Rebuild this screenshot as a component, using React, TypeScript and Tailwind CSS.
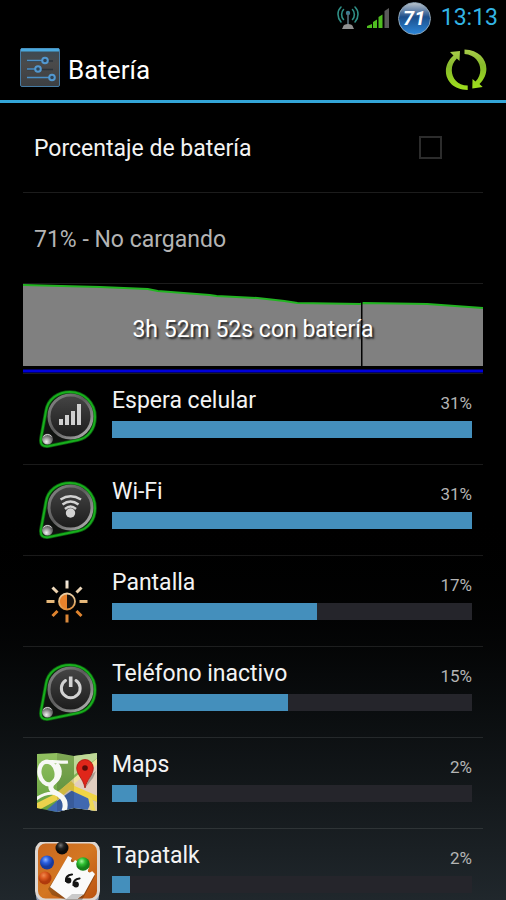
import React from 'react';

const history = [
    [0, 1], [77, 3], [125, 5], [135, 7], [187, 11], [194, 12], [235, 14], [262, 17],
    [275, 19], [338, 20], [341, 19], [405, 20], [461, 24],
];

function Drop({ id, children }: { id: string; children: React.ReactNode }) {
    return (
        <svg viewBox="0 0 65 65" className="w-full" aria-hidden="true">
            <defs>
                <linearGradient id={`${id}-ring`} x1="0" y1="0" x2="1" y2="1">
                    <stop offset="0" stopColor="#8a8a8a" />
                    <stop offset="0.45" stopColor="#5c5c5c" />
                    <stop offset="0.75" stopColor="#8a8a8a" />
                    <stop offset="1" stopColor="#c4c4c4" />
                </linearGradient>
                <linearGradient id={`${id}-face`} x1="0" y1="0" x2="0" y2="1">
                    <stop offset="0" stopColor="#454545" />
                    <stop offset="1" stopColor="#1b1b1b" />
                </linearGradient>
                <radialGradient id={`${id}-ball`} cx="0.4" cy="0.75" r="0.8">
                    <stop offset="0" stopColor="#f2f2f2" />
                    <stop offset="0.5" stopColor="#8d8d8d" />
                    <stop offset="1" stopColor="#333" />
                </radialGradient>
            </defs>
            <path
                d="M11 24C13 12 23 5 35 5C49 5 60 16 60 30C60 42 53 51 43 53L14 59C8 60 5 58 6 51Z"
                fill="#101310"
                stroke="#0a5a0d"
                strokeWidth="3.6"
                strokeLinejoin="round"
            />
            <path
                d="M11 24C13 12 23 5 35 5C49 5 60 16 60 30C60 42 53 51 43 53L14 59C8 60 5 58 6 51Z"
                fill="none"
                stroke="#18ae1d"
                strokeWidth="2"
                strokeLinejoin="round"
            />
            <circle cx="35.5" cy="29.5" r="21.5" fill={`url(#${id}-face)`} stroke={`url(#${id}-ring)`} strokeWidth="3" />
            <circle cx="12.5" cy="52" r="5.5" fill={`url(#${id}-ball)`} />
            <path d="M8.5 49.5a5 5 0 0 1 8 0" fill="none" stroke="#ddd" strokeWidth="1" />
            {children}
        </svg>
    );
}

function CellIcon() {
    return (
        <Drop id="cell">
            <g fill="#d0d0d0">
                <rect x="24" y="32" width="4" height="6" />
                <rect x="30" y="28" width="4" height="10" />
                <rect x="36" y="24" width="4" height="14" />
                <rect x="42" y="17" width="4" height="21" />
            </g>
        </Drop>
    );
}

function WifiIcon() {
    return (
        <Drop id="wifi">
            <g fill="none" stroke="#d2d2d2" strokeWidth="2.4">
                <path d="M25.5 21.5Q35.5 15 46 21.5" />
                <path d="M27.5 26.5Q35.5 20.5 43.5 26.5" />
                <path d="M30 31Q35.5 26 41 31" />
            </g>
            <circle cx="35.5" cy="35" r="4.7" fill="#d2d2d2" />
        </Drop>
    );
}

function PowerIcon() {
    return (
        <Drop id="power">
            <path d="M30.5 20.500a9.400 9.400 0 1 0 10.500 0" fill="none" stroke="#d2d2d2" strokeWidth="3" strokeLinecap="round" />
            <path d="M35.7 16.5V27" fill="none" stroke="#d2d2d2" strokeWidth="3.6" />
        </Drop>
    );
}

function DisplayIcon() {
    return (
        <svg viewBox="0 0 65 65" className="w-full" aria-hidden="true">
            <defs>
                <linearGradient id="sun" x1="0" y1="12" x2="0" y2="53" gradientUnits="userSpaceOnUse">
                    <stop offset="0" stopColor="#f3ece2" />
                    <stop offset="0.5" stopColor="#e5b87b" />
                    <stop offset="0.75" stopColor="#e0822a" />
                    <stop offset="1" stopColor="#d98a3f" />
                </linearGradient>
            </defs>
            <g fill="url(#sun)">
                <rect x="30.5" y="11.5" width="3" height="8" />
                <rect x="30.5" y="45.5" width="3" height="8" />
                <rect x="11.5" y="31" width="8" height="3" />
                <rect x="44.5" y="31" width="8" height="3" />
            </g>
            <path d="M17.5 18.500L22.500 23.500M41.500 23.500L46.500 18.500M17.500 47L22.500 42M41.500 42L46.500 47" fill="none" stroke="url(#sun)" strokeWidth="3" />
            <circle cx="32" cy="32.5" r="8" fill="#17120e" />
            <path d="M32 24.5a8 8 0 0 0 0 16z" fill="#e8812b" />
            <circle cx="32" cy="32.5" r="8" fill="none" stroke="url(#sun)" strokeWidth="1.8" />
        </svg>
    );
}

function MapsIcon() {
    return (
        <svg viewBox="0 0 65 65" className="w-full" aria-hidden="true">
            <defs>
                <clipPath id="maps-sheet">
                    <path d="M2 3L22 2L39 5L62 2V60L39 57L22 61L2 57Z" />
                </clipPath>
                <linearGradient id="maps-green" x1="0" y1="0" x2="0" y2="1">
                    <stop offset="0" stopColor="#93c262" />
                    <stop offset="1" stopColor="#5f9c3a" />
                </linearGradient>
            </defs>
            <g clipPath="url(#maps-sheet)">
                <rect width="65" height="65" fill="url(#maps-green)" />
                <path d="M22 46L39 31L62 10V65H22z" fill="#e2cec0" />
                <path d="M39 0H65V5L39 24z" fill="#bed896" />
                <path d="M20 44L39 27L65 5V11L39 33L24 47z" fill="#f0e3a0" />
                <path d="M2 52L20 43L36 30L40 34L24 48L2 60z" fill="#ecd24c" />
                <path d="M5 65L22 50L39 38L65 51V65z" fill="#4068b0" />
                <path d="M35 33L65 46V53L33 38z" fill="#f0d445" />
                <path d="M50 65L57 49L65 52V65z" fill="#dac9a5" />
                <path d="M57 65L53 46L57 47L62 65z" fill="#efd856" />
                <path d="M22 0L39 4V65L22 61z" fill="#000" opacity="0.12" />
                <g fill="none" stroke="#f7f8f5">
                    <ellipse cx="13" cy="22" rx="8.5" ry="11.5" strokeWidth="4.2" transform="rotate(-12 13 22)" />
                    <path d="M10 11.500C17 9 24 12 33 11" strokeWidth="3.200" />
                    <path d="M21 13C27 20 24 27 19 31C14 35 15 39 21 42C29 46 32 52 29 60" strokeWidth="5" />
                    <path d="M22 43C15 41 8 43 1 48" strokeWidth="3.200" />
                </g>
            </g>
            <path d="M50 37L58 27L61 20L56 24z" fill="#000" opacity="0.25" />
            <path d="M50 37C48 27 41.700 24 41.700 17A8.300 8.500 0 0 1 58.300 17C58.300 24 52 28 50 37Z" fill="#e0261a" stroke="#a91710" strokeWidth="0.8" />
            <circle cx="50" cy="17" r="2.8" fill="#5b0c08" />
        </svg>
    );
}

function TapatalkIcon() {
    return (
        <svg viewBox="0 0 65 65" className="w-full" aria-hidden="true">
            <defs>
                <linearGradient id="cork" x1="0" y1="0" x2="1" y2="1">
                    <stop offset="0" stopColor="#c9671f" />
                    <stop offset="0.5" stopColor="#d47722" />
                    <stop offset="1" stopColor="#b9500f" />
                </linearGradient>
                <radialGradient id="pin-black" cx="0.4" cy="0.3">
                    <stop offset="0" stopColor="#777" />
                    <stop offset="0.5" stopColor="#222" />
                    <stop offset="1" stopColor="#0b0b0b" />
                </radialGradient>
                <radialGradient id="pin-blue" cx="0.4" cy="0.3">
                    <stop offset="0" stopColor="#8fb4ff" />
                    <stop offset="0.5" stopColor="#2b5fe0" />
                    <stop offset="1" stopColor="#173a9c" />
                </radialGradient>
                <radialGradient id="pin-green" cx="0.4" cy="0.3">
                    <stop offset="0" stopColor="#a4f59c" />
                    <stop offset="0.5" stopColor="#2fc032" />
                    <stop offset="1" stopColor="#158019" />
                </radialGradient>
                <radialGradient id="pin-orange" cx="0.4" cy="0.3">
                    <stop offset="0" stopColor="#f08a50" />
                    <stop offset="0.5" stopColor="#dc5a20" />
                    <stop offset="1" stopColor="#b03a0c" />
                </radialGradient>
            </defs>
            <rect x="1" y="1" width="63" height="63" rx="10" fill="#8d9db5" />
            <rect x="1.5" y="0" width="62" height="58" rx="9" fill="url(#cork)" stroke="#ddd6d1" strokeWidth="3" />
            <path d="M13 47L33 15L60 34L46 60L40 61L17 53z" fill="#000" opacity="0.25" />
            <path d="M15 45L33 14L37 16C34 20 38 22 40 18L54 26C51 30 55 32 57 29L60 32L49 52L42 57H31z" fill="#fafafa" />
            <path d="M31 57L37 52L49 52L42 57z" fill="#c9c9c9" />
            <circle cx="27" cy="6" r="6.5" fill="url(#pin-black)" />
            <circle cx="12" cy="20.5" r="7" fill="url(#pin-blue)" />
            <circle cx="48" cy="22" r="6.8" fill="url(#pin-green)" />
            <circle cx="10" cy="36" r="6.5" fill="url(#pin-orange)" />
            <g fill="none" stroke="#141414" strokeWidth="2.2" strokeLinecap="round">
                <path d="M37 32.500C33 33 30.500 35 31 39" />
                <path d="M44.500 36.500C40.500 37 38 39 38.500 43" />
            </g>
            <circle cx="33.5" cy="38.5" r="2.9" fill="#141414" />
            <circle cx="41" cy="42.5" r="2.9" fill="#141414" />
        </svg>
    );
}

const usage = [
    { name: 'Espera celular', percent: 31, bar: 100, icon: CellIcon },
    { name: 'Wi-Fi', percent: 31, bar: 100, icon: WifiIcon },
    { name: 'Pantalla', percent: 17, bar: 57, icon: DisplayIcon },
    { name: 'Teléfono inactivo', percent: 15, bar: 49, icon: PowerIcon },
    { name: 'Maps', percent: 2, bar: 7, icon: MapsIcon },
    { name: 'Tapatalk', percent: 2, bar: 5, icon: TapatalkIcon },
];

function StatusBar() {
    return (
        <div className="flex h-9 shrink-0 items-center justify-end pr-2">
            <svg viewBox="0 0 22 26" className="mr-2 h-[26px] w-[22px]" aria-hidden="true">
                <g fill="none" stroke="#2f8f86" strokeWidth="1.6" strokeLinecap="round">
                    <path d="M4 2C0 6 0 12 4 17M18 2C22 6 22 12 18 17" />
                    <path d="M6.5 4.500C4 7 4 12 6.500 14.500M15.500 4.500C18 7 18 12 15.500 14.500" />
                </g>
                <circle cx="11" cy="8" r="2.2" fill="#3b7e92" />
                <path d="M11 8V20" stroke="#57707c" strokeWidth="1.6" />
                <path d="M6 22C6 18 16 18 16 22L17 24H5z" fill="#909090" />
            </svg>
            <svg viewBox="0 0 23 20" className="mr-2 h-5 w-[23px]" aria-hidden="true">
                <g fill="#4fbd20">
                    <path d="M0 20V18L5 16V20zM6 20V14L10 11.500V20zM11.500 20V9L15.500 6.500V20z" />
                </g>
                <path d="M17.500 20V3L22 0V20z" fill="#5a5a5a" />
            </svg>
            <span className="flex size-[33px] items-center justify-center rounded-full border border-[#8fa6b8] bg-linear-to-b from-[#b8c1c8] via-[#1c4f8c] via-45% to-[#2c86d8] font-['Roboto'] text-xl font-bold italic text-white">
                71
            </span>
            <time className="ml-2.5 text-[23px] leading-9 text-[#33b5e5]">13:13</time>
        </div>
    );
}

function ActionBar() {
    return (
        <header className="flex h-[67px] shrink-0 items-center border-b-3 border-[#33a5d8] pr-[18px] pl-5">
            <svg viewBox="0 0 40 40" className="size-10" aria-hidden="true">
                <defs>
                    <linearGradient id="settings-face" x1="0" y1="0" x2="0" y2="1">
                        <stop offset="0" stopColor="#3a4a55" />
                        <stop offset="0.4" stopColor="#4a4a4a" />
                        <stop offset="1" stopColor="#3c3f42" />
                    </linearGradient>
                </defs>
                <rect x="0.5" y="0.5" width="39" height="38" rx="1.5" fill="url(#settings-face)" stroke="#467ba3" />
                <path d="M1 2H39" stroke="#4aa9de" strokeWidth="3" />
                <g fill="none" strokeWidth="1.5">
                    <path d="M7 13H33M7 21.500H33" stroke="#2b3238" />
                    <path d="M7 12.500H22M7 21H15M7 29.500H30" stroke="#4a8fc6" />
                </g>
                <g fill="#2d4356" stroke="#5298d0" strokeWidth="2">
                    <circle cx="25" cy="12.5" r="2.8" />
                    <circle cx="18" cy="21" r="2.8" />
                    <circle cx="32" cy="29.5" r="2.8" />
                </g>
            </svg>
            <h1 className="ml-2 pt-1 text-[26px] text-white">Batería</h1>
            <button type="button" aria-label="Actualizar" className="ml-auto pt-1">
                <svg viewBox="0 0 44 44" className="size-11" aria-hidden="true">
                    <defs>
                        <linearGradient id="refresh" x1="0" y1="0" x2="0" y2="1">
                            <stop offset="0" stopColor="#a8cc4a" />
                            <stop offset="0.4" stopColor="#86b92a" />
                            <stop offset="1" stopColor="#9fe01c" />
                        </linearGradient>
                    </defs>
                    <path d="M6 4L16 3L15.500 13L12.800 10.500C3 20 8 37 23.700 37.500V42C2 42 -5 20 9.500 7.500z" fill="url(#refresh)" />
                    <path d="M20.500 1.500C42 2 49 23 35.500 36L38.700 39L28.300 40.500L28.500 31L31.500 33.500C41 24 36 7 20.500 6z" fill="url(#refresh)" />
                </svg>
            </button>
        </header>
    );
}

function HistoryChart() {
    const line = history.map(([x, y]) => `${x},${y}`).join(' ');
    return (
        <div className="relative h-[91px] border-y border-[#1c1c1c]">
            <svg viewBox="0 0 461 89" preserveAspectRatio="none" className="h-full w-full" aria-hidden="true">
                <polygon points={`0,82 ${line} 461,82`} fill="#808080" />
                <polyline points={line} fill="none" stroke="#22b422" strokeWidth="2" />
                <path d="M339.5 18V82" stroke="#000" strokeWidth="1.5" />
                <path d="M0 87H461" stroke="#0000d8" strokeWidth="3" />
            </svg>
            <p className="absolute inset-0 flex items-center justify-center pt-1 text-[23px] text-white [text-shadow:2px_2px_2px_#222]">
                3h 52m 52s con batería
            </p>
        </div>
    );
}

export default function App() {
    return (
        <div className="flex h-screen flex-col overflow-hidden bg-linear-to-b from-black from-55% via-[#07090a] via-75% to-[#20272c] font-['Roboto','Noto_Sans',sans-serif]">
            <StatusBar />
            <ActionBar />
            <main className="min-h-0 flex-1 overflow-hidden px-[23px]">
                <div className="flex h-[90px] items-center justify-between border-b border-[#1c1c1c] pr-[41px] pl-[11px]">
                    <label htmlFor="show-percent" className="pt-1 text-[23px] text-[#f3f3f3]">
                        Porcentaje de batería
                    </label>
                    <input id="show-percent" type="checkbox" className="size-[23px] appearance-none border-2 border-[#2c2c2c]" />
                </div>
                <p className="flex h-[90px] items-center pt-1 pl-[11px] text-[23px] text-[#b4b4b4]">71% - No cargando</p>
                <HistoryChart />
                <ul>
                    {usage.map((item) => (
                        <li key={item.name} className="flex h-[91px] items-center gap-3 border-b border-white/10 pr-[11px] pl-3">
                            <div className="w-[65px] shrink-0">
                                <item.icon />
                            </div>
                            <div className="flex-1 pb-4">
                                <div className="flex items-end justify-between">
                                    <span className="text-[23px] leading-8 text-[#f3f3f3]">{item.name}</span>
                                    <span className="text-[17px] leading-7 text-[#b4b4b4]">{item.percent}%</span>
                                </div>
                                <div className="mt-1 h-[17px] bg-[#25252b]">
                                    <div className="h-full bg-[#448fbc]" style={{ width: `${item.bar}%` }} />
                                </div>
                            </div>
                        </li>
                    ))}
                </ul>
            </main>
        </div>
    );
}
